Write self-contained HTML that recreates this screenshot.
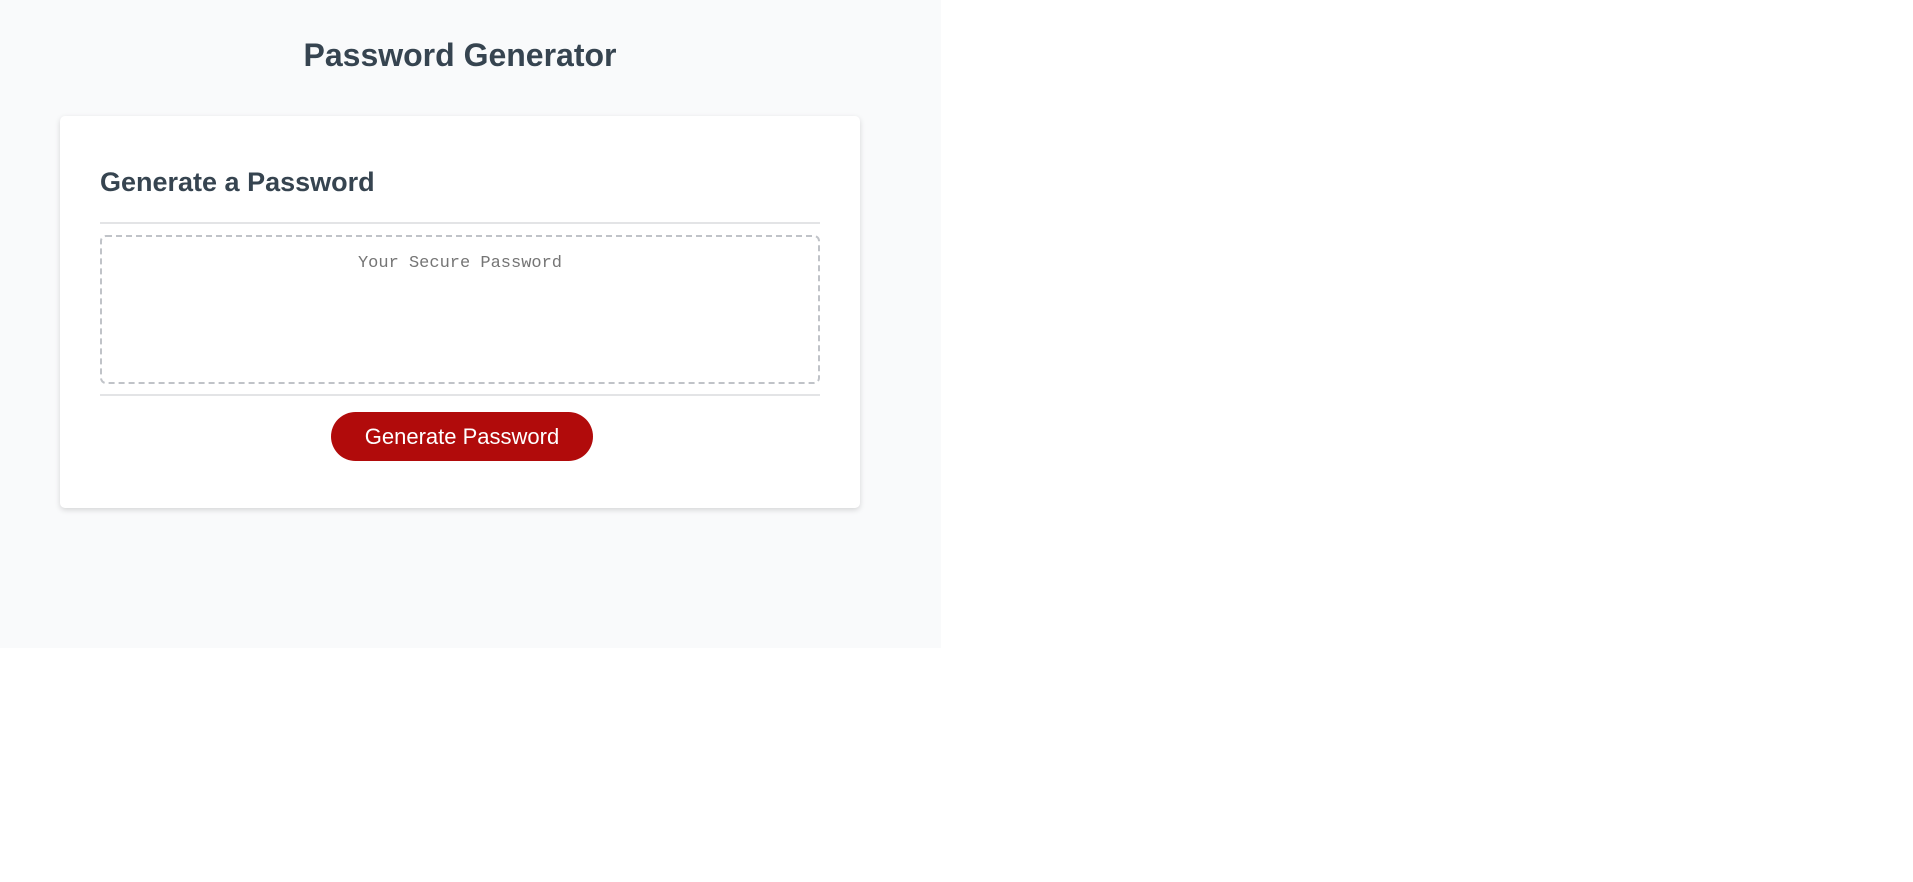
<!DOCTYPE html>
<html><head><style>
html,body{margin:0;padding:0;width:1913px;height:882px;background:#fff;font-family:"Liberation Sans",Arial,sans-serif;}
.panel{position:absolute;left:0;top:0;width:941px;height:648px;background:#f9fafb;}
h1{position:absolute;left:0;width:920px;top:37px;margin:0;text-align:center;font-size:32px;font-weight:bold;color:#364450;}
.card{position:absolute;left:60px;top:116px;width:800px;height:392px;background:#fff;border-radius:5px;box-shadow:0 2px 6px rgba(0,0,0,0.15);}
h2{position:absolute;left:40px;top:51px;margin:0;font-size:27px;color:#364450;}
.hr1{position:absolute;left:40px;top:106px;width:720px;height:2px;background:#e3e4e6;}
.ta{position:absolute;left:40px;top:119px;width:720px;height:149px;border:2px dashed #c0c3c8;border-radius:6px;text-align:center;font-family:"Liberation Mono",monospace;font-size:17px;color:#757575;box-sizing:border-box;}
.ta span{position:absolute;left:0;right:0;top:17px;}
.hr2{position:absolute;left:40px;top:278px;width:720px;height:2px;background:#e3e4e6;}
.btn{position:absolute;left:271px;top:296px;width:262px;height:49px;border-radius:25px;background:#b10b0b;color:#fff;font-size:22px;line-height:49px;text-align:center;}
</style></head><body>
<div class="panel">
<h1>Password Generator</h1>
<div class="card">
<h2>Generate a Password</h2>
<div class="hr1"></div>
<div class="ta"><span>Your Secure Password</span></div>
<div class="hr2"></div>
<div class="btn">Generate Password</div>
</div>
</div>
</body></html>
